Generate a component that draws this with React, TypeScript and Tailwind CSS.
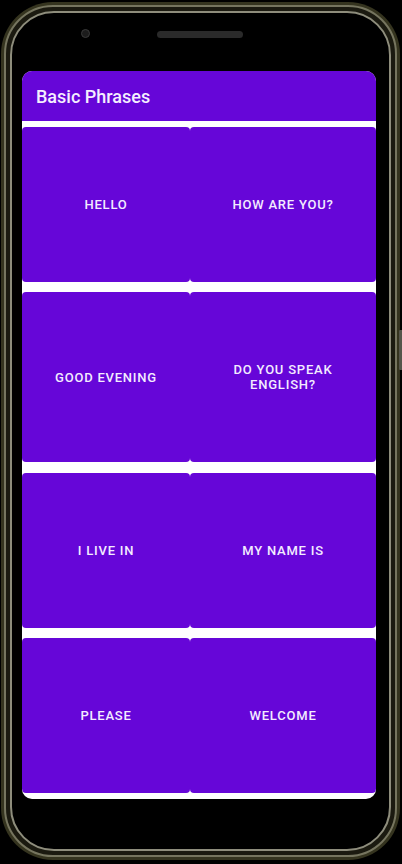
const phrases: { label: string; lines?: string[] }[][] = [
  [{ label: "Hello" }, { label: "How are you?" }],
  [{ label: "Good evening" }, { label: "Do you speak English?", lines: ["Do you speak", "English?"] }],
  [{ label: "I live in" }, { label: "My name is" }],
  [{ label: "Please" }, { label: "Welcome" }],
];

const rowHeights = ["h-[155px]", "h-[170px]", "h-[155px]", "h-[155px]"];

function PhraseButton({ label, lines, className }: { label: string; lines?: string[]; className: string }) {
  return (
    <button
      type="button"
      className={`${className} flex h-full flex-col items-center justify-center rounded-[4px] bg-[#6606d8] text-center text-[13px] font-medium uppercase leading-[15px] tracking-[0.06em] text-[#f3ecff]`}
    >
      {lines ? lines.map((l) => <span key={l}>{l}</span>) : <span>{label}</span>}
    </button>
  );
}

export default function App() {
  return (
    <div className="relative h-[864px] w-[402px] overflow-hidden bg-black" style={{ fontFamily: "Roboto, 'Noto Sans', sans-serif" }}>
      <div className="ml-[1px] mt-[2px] h-[858px] w-[399px] rounded-[52px] bg-[#35341f] p-[3px]">
        <div className="h-full rounded-[49px] border-2 border-[#76755f] bg-[#1b1a10] p-[4px]">
          <div className="relative flex h-full flex-col rounded-[44px] border-2 border-[#8e8d7c] bg-black pb-[50px] pl-[10px] pr-[13px] pt-[58px]">
            <div className="absolute left-[69px] top-[16px] h-[9px] w-[9px] rounded-full border border-[#3a3a3a] bg-[#1c1c1c]" />
            <div className="absolute left-[145px] top-[18px] h-[7px] w-[86px] rounded-full bg-[#2a2a2a]" />

            <div className="flex flex-1 flex-col overflow-hidden rounded-[10px] bg-white">
              <div className="flex h-[50px] shrink-0 items-center bg-[#6606d8] pl-[14px]">
                <h1 className="text-[18px] font-medium text-[#f5efff]">Basic Phrases</h1>
              </div>
              <div className="flex flex-1 flex-col pb-[6px] pt-[6px]">
                {phrases.map((row, i) => (
                  <div key={i} className={`flex ${rowHeights[i]} ${i > 0 ? (i === 2 ? "mt-[11px]" : "mt-[10px]") : ""}`}>
                    <PhraseButton label={row[0].label} lines={row[0].lines} className="w-[168px] shrink-0" />
                    <PhraseButton label={row[1].label} lines={row[1].lines} className="flex-1" />
                  </div>
                ))}
              </div>
            </div>
          </div>
        </div>
      </div>
      <div className="absolute right-0 top-[330px] h-[40px] w-[3px] rounded-l-[1px] bg-[#55554a]" />
    </div>
  );
}
